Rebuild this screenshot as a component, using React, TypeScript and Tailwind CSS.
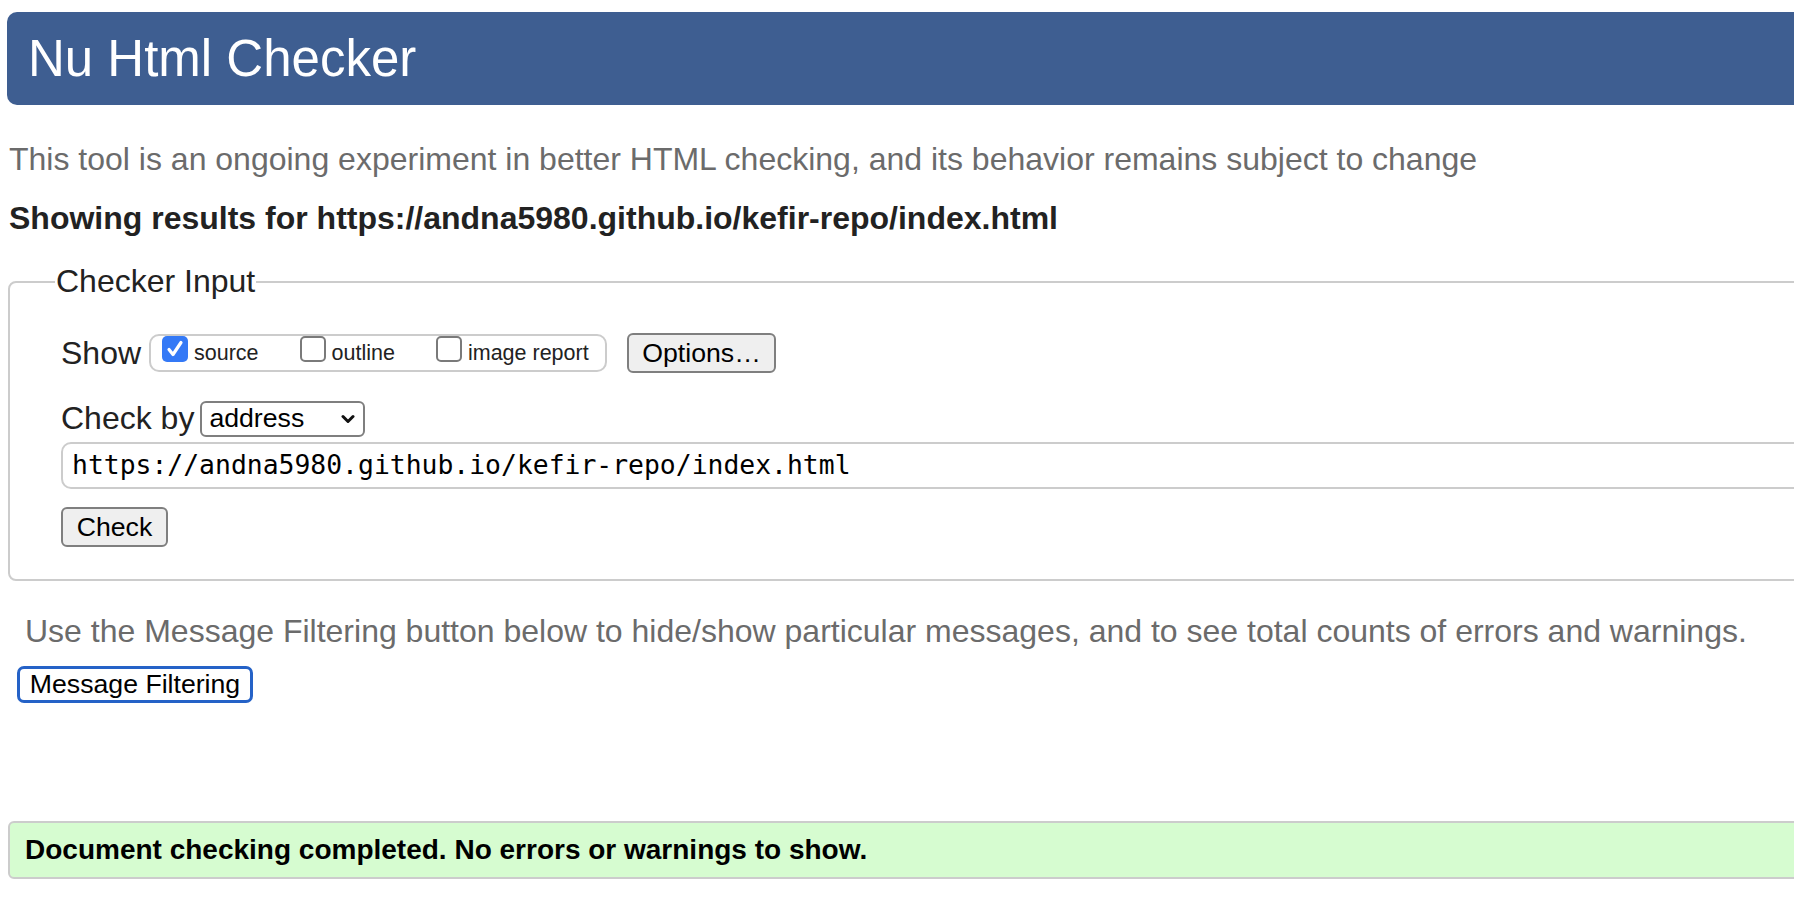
import React from "react";

const sans = "font-['Liberation_Sans',Arial,Helvetica,sans-serif]";

const options = [
  { label: "source", checked: true },
  { label: "outline", checked: false },
  { label: "image report", checked: false },
];

function Checkbox({ checked }: { checked: boolean }) {
  if (checked) {
    return (
      <span className="flex h-[26px] w-[26px] shrink-0 items-center justify-center rounded-[5px] bg-[#3479f6]">
        <svg width="20" height="20" viewBox="0 0 20 20" fill="none">
          <path d="M4 10.5l4 5 8-12" stroke="white" strokeWidth="3.2" strokeLinecap="round" strokeLinejoin="round" />
        </svg>
      </span>
    );
  }
  return <span className="h-[26px] w-[26px] shrink-0 rounded-[5px] border-2 border-[#7a7a7a] bg-white" />;
}

const App = () => {
  return (
    <div className={`h-[900px] w-full overflow-hidden bg-white ${sans}`}>
      <div className="w-[1840px] pl-[7px] pt-[12px]">
        {/* Header */}
        <h1 className="flex h-[93px] items-center rounded-[10px] bg-[#3e5e91] pl-[21px] text-[51px] leading-none text-white">
          Nu Html Checker
        </h1>

        <p className="ml-[2px] mt-[36px] text-[32px] leading-[37px] text-[#6b6b6b]">
          This tool is an ongoing experiment in better HTML checking, and its behavior remains subject to change
        </p>
        <p className="ml-[2px] mt-[22px] text-[32px] font-bold leading-[37px] text-[#222]">
          Showing results for https://andna5980.github.io/kefir-repo/index.html
        </p>

        {/* Checker input */}
        <fieldset className="ml-[1px] mt-[26px] rounded-[8px] border-2 border-[#cccccc] pb-[32px] pl-[45px] pt-[33px]">
          <legend className="px-[1px] text-[32px] leading-[37px] text-[#222]">Checker Input</legend>
          <div className="pl-[6px] text-[#222]">
            <div className="flex h-[40px] items-center">
              <span className="text-[32px] leading-[37px]">Show</span>
              <div className="ml-[8px] flex h-[38px] w-[458px] items-start gap-[41px] rounded-[10px] border-2 border-[#cccccc] pl-[11px]">
                {options.map((o) => (
                  <label key={o.label} className="flex items-start gap-[6px]">
                    <Checkbox checked={o.checked} />
                    <span className="mt-[7px] text-[21.5px] leading-none">{o.label}</span>
                  </label>
                ))}
              </div>
              <button className="ml-[20px] h-[40px] w-[149px] rounded-[6px] border-2 border-[#7f7f7f] bg-[#efefef] text-[26.67px] leading-none text-black">
                Options…
              </button>
            </div>

            <div className="mt-[27px] flex h-[37px] items-center">
              <span className="text-[32px] leading-[37px]">Check by</span>
              <div className="ml-[6px] flex h-[36px] w-[165px] items-center justify-between rounded-[6px] border-2 border-[#7f7f7f] bg-white pl-[7px] pr-[8px] text-[26.67px] leading-none text-black">
                <span>address</span>
                <svg width="14" height="10" viewBox="0 0 14 10" fill="none">
                  <path d="M2 2.5l5 5 5-5" stroke="#111" strokeWidth="3" strokeLinecap="round" strokeLinejoin="round" />
                </svg>
              </div>
            </div>

            <div className="mt-[5px] flex h-[47px] items-center rounded-[10px] border-2 border-[#cccccc] pl-[9px] font-['DejaVu_Sans_Mono',Menlo,monospace] text-[26.4px] leading-none text-black">
              https://andna5980.github.io/kefir-repo/index.html
            </div>

            <button className="mt-[18px] h-[40px] w-[107px] rounded-[6px] border-2 border-[#7f7f7f] bg-[#efefef] text-[26.67px] leading-none text-black">
              Check
            </button>
          </div>
        </fieldset>

        <p className="ml-[18px] mt-[32px] text-[32px] leading-[37px] text-[#6b6b6b]">
          Use the Message Filtering button below to hide/show particular messages, and to see total counts of errors and warnings.
        </p>
        <button className="ml-[10px] mt-[16px] block h-[37px] w-[236px] rounded-[7px] border-[3px] border-[#2562c7] bg-white text-[26.67px] leading-none text-black">
          Message Filtering
        </button>

        {/* Result */}
        <div className="ml-[1px] mt-[118px] flex h-[58px] items-center rounded-[6px] border-2 border-[#cccccc] bg-[#d6fcd0] pl-[15px] text-[28px] font-bold text-black">
          Document checking completed. No errors or warnings to show.
        </div>
      </div>
    </div>
  );
};

export default App;
